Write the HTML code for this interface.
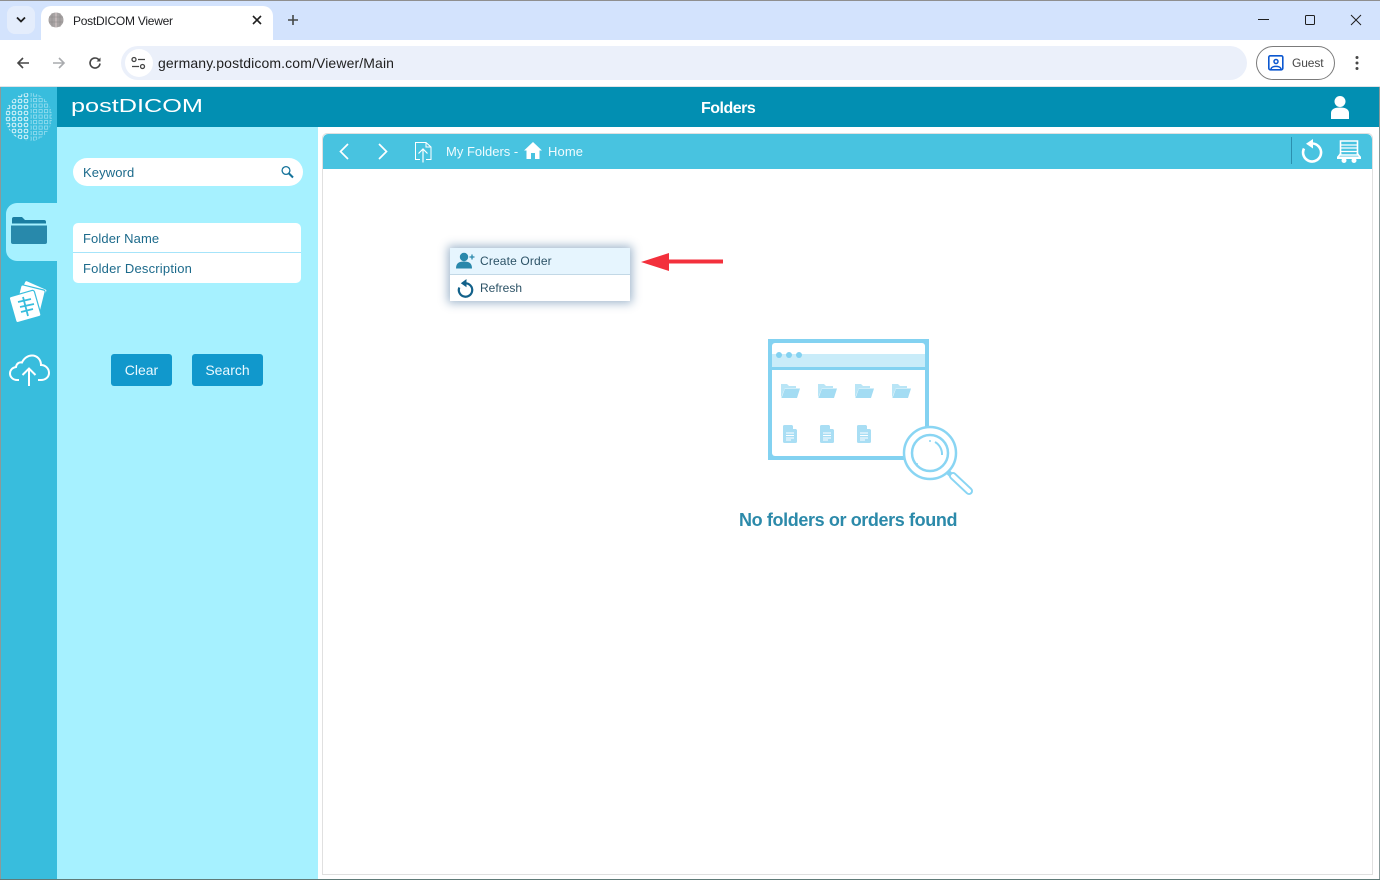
<!DOCTYPE html>
<html lang="en">
<head>
<meta charset="utf-8">
<title>PostDICOM Viewer</title>
<style>
html,body{margin:0;padding:0;width:1380px;height:880px;overflow:hidden;background:#fff;font-family:"Liberation Sans",sans-serif;}
.a{position:absolute;white-space:nowrap;}
svg{position:absolute;overflow:visible;}
</style>
</head>
<body>
<!-- Chrome frame -->
<div class="a" style="left:0;top:0;width:1380px;height:40px;background:#d3e3fd;"></div>
<div class="a" style="left:0;top:0;width:1380px;height:1px;background:#8f8f8f;"></div>
<div class="a" style="left:7px;top:6px;width:28px;height:28px;border-radius:8px;background:#e4edfc;"></div>
<svg style="left:16px;top:16px" width="10" height="8"><path d="M1 1.500L5 5.500L9 1.500" fill="none" stroke="#1f1f1f" stroke-width="1.800"/></svg>
<div class="a" style="left:41px;top:6px;width:232px;height:34px;background:#fff;border-radius:10px 10px 0 0;"></div>
<svg style="left:48px;top:12px" width="16" height="16"><circle cx="8" cy="8" r="7.500" fill="#a7a3a3"/><path d="M8 .5V15.500" stroke="#d9c8c8" stroke-width="1"/><path d="M1 5H15M1 10H15M4 1V15M12 1V15" stroke="#8b8686" stroke-width=".5"/></svg>
<div class="a" style="left:73px;top:14px;font-size:12px;line-height:15px;color:#202124;letter-spacing:-.25px;">PostDICOM Viewer</div>
<svg style="left:252px;top:15px" width="10" height="10"><path d="M1 1L9 9M9 1L1 9" stroke="#1f1f1f" stroke-width="1.600"/></svg>
<svg style="left:287px;top:14px" width="12" height="12"><path d="M6 1V11M1 6H11" stroke="#444746" stroke-width="1.600"/></svg>
<svg style="left:1258px;top:19px" width="11" height="2"><path d="M0 .5H11" stroke="#1f1f1f" stroke-width="1"/></svg>
<svg style="left:1305px;top:15px" width="10" height="10"><rect x=".5" y=".5" width="9" height="9" rx="1" fill="none" stroke="#1f1f1f" stroke-width="1"/></svg>
<svg style="left:1351px;top:15px" width="10" height="10"><path d="M0 0L10 10M10 0L0 10" stroke="#1f1f1f" stroke-width="1"/></svg>
<!-- Toolbar -->
<div class="a" style="left:1px;top:40px;width:1378px;height:46px;background:#fff;"></div>
<div class="a" style="left:0;top:86px;width:1380px;height:1px;background:#dfe3e8;"></div>
<svg style="left:16px;top:56px" width="14" height="14"><path d="M13 7H2M7 2L2 7L7 12" fill="none" stroke="#474747" stroke-width="1.600"/></svg>
<svg style="left:52px;top:56px" width="14" height="14"><path d="M1 7H12M7 2L12 7L7 12" fill="none" stroke="#a9abae" stroke-width="1.600"/></svg>
<svg style="left:88px;top:56px" width="14" height="14"><path d="M12 7.500A5 5 0 1 1 10.500 3.400L12 5" fill="none" stroke="#474747" stroke-width="1.600"/><path d="M12.500 1.500V5.500H8.500" fill="#474747"/></svg>
<div class="a" style="left:121px;top:46px;width:1126px;height:34px;border-radius:17px;background:#ebf0fa;"></div>
<div class="a" style="left:125px;top:49px;width:28px;height:28px;border-radius:14px;background:#fff;"></div>
<svg style="left:131px;top:56px" width="15" height="14"><circle cx="3" cy="3.500" r="2" fill="none" stroke="#444" stroke-width="1.300"/><path d="M7 3.500H14M1 10.500H8" stroke="#444" stroke-width="1.300"/><circle cx="11.500" cy="10.500" r="2" fill="none" stroke="#444" stroke-width="1.300"/></svg>
<div class="a" style="left:158px;top:55px;font-size:14px;line-height:16px;color:#1f1f1f;letter-spacing:.12px;">germany.postdicom.com/Viewer/Main</div>
<div class="a" style="left:1256px;top:46px;width:77px;height:32px;border:1px solid #7b7b7b;border-radius:17px;background:#fff;"></div>
<svg style="left:1268px;top:55px" width="16" height="16"><rect x=".8" y=".8" width="14" height="14" rx="1.500" fill="none" stroke="#0b57d0" stroke-width="1.600"/><circle cx="8" cy="6.500" r="2" fill="none" stroke="#0b57d0" stroke-width="1.500"/><path d="M3 14C3.500 10.500 12.500 10.500 13 14" fill="none" stroke="#0b57d0" stroke-width="1.500"/></svg>
<div class="a" style="left:1292px;top:56px;font-size:12px;line-height:15px;color:#474747;letter-spacing:-.1px;">Guest</div>
<svg style="left:1355px;top:55px" width="4" height="16"><circle cx="2" cy="2.500" r="1.500" fill="#474747"/><circle cx="2" cy="8" r="1.500" fill="#474747"/><circle cx="2" cy="13.500" r="1.500" fill="#474747"/></svg>

<!-- App header -->
<div class="a" style="left:1px;top:87px;width:1378px;height:40px;background:#028fb2;"></div>
<div class="a" style="left:1px;top:87px;width:56px;height:793px;background:#38bddd;"></div>
<div class="a" style="left:57px;top:127px;width:261px;height:753px;background:#a6f1ff;"></div>
<svg style="left:5px;top:92px" width="48" height="50" viewBox="0 0 48 50">
<defs>
<pattern id="l" width="6" height="6" patternUnits="userSpaceOnUse"><rect x="1.200" y="1.200" width="3.600" height="3.600" rx="1.500" fill="none" stroke="#fff" stroke-width="1"/></pattern>
<pattern id="r" width="5.500" height="5.500" patternUnits="userSpaceOnUse"><rect x="1" y="1" width="3.200" height="3.200" fill="none" stroke="#d9f4fb" stroke-width=".8"/></pattern>
<clipPath id="cl"><path d="M24.500 1A24 24 0 0 0 24.500 49Z"/></clipPath>
<clipPath id="cr"><path d="M25.500 1C37 1 47 12 47 25C47 38 37 49 25.500 49Z"/></clipPath>
</defs>
<rect x="0" y="0" width="25" height="50" fill="url(#l)" clip-path="url(#cl)" opacity=".8"/>
<rect x="25" y="0" width="24" height="50" fill="url(#r)" clip-path="url(#cr)" opacity=".6"/>
</svg>
<svg style="left:71px;top:97px" width="134" height="20"><text x="0" y="15" font-family="Liberation Sans" font-size="18.500" fill="#fff" textLength="132" lengthAdjust="spacingAndGlyphs">postDICOM</text></svg>
<div class="a" style="left:701px;top:99px;font-size:16px;line-height:19px;font-weight:bold;color:#fff;letter-spacing:-.5px;">Folders</div>
<svg style="left:1330px;top:95px" width="20" height="25"><circle cx="10" cy="6.500" r="5.500" fill="#fff"/><path d="M1 24V18C1 14 5 12.500 10 12.500C15 12.500 19 14 19 18V24Z" fill="#fff"/></svg>

<!-- Sidebar tabs -->
<div class="a" style="left:6px;top:203px;width:51px;height:58px;background:#a6f1ff;border-radius:11px 0 0 11px;"></div>
<svg style="left:11px;top:216px" width="37" height="29"><path d="M1 12V3Q1 1 3 1H11L14 4H33Q35 4 35 6V12Z" fill="#1a7ea2"/><path d="M1 7.500H35V10H1Z" fill="#a6f1ff"/><path d="M0 9.500H36V26Q36 28 34 28H2Q0 28 0 26Z" fill="#2889ab"/></svg>
<svg style="left:9px;top:281px" width="40" height="43" viewBox="0 0 40 43">
<rect x="11" y="3" width="24" height="22" rx="2" fill="#fff" stroke="#38bddd" stroke-width="1" transform="rotate(24 23 14)"/>
<rect x="9" y="6" width="25" height="24" rx="2" fill="#fff" stroke="#38bddd" stroke-width="1.200" transform="rotate(14 21 18)"/>
<rect x="3" y="12" width="26" height="27" rx="2" fill="#fff" stroke="#38bddd" stroke-width="1.200" transform="rotate(-16 16 25)"/>
<path d="M14 16L19 35M9 21L22 18M11 26L25 23M12 31L24 28" stroke="#38bddd" stroke-width="1.800" fill="none"/>
</svg>
<svg style="left:9px;top:354px" width="41" height="33" viewBox="0 0 41 33"><path d="M10 26H8C4 26 1 23 1 19.500C1 16 3.500 13.500 7 13C7.500 9.500 10 8 13 8.500C15 4 19 1.500 23 1.500C28 1.500 32 5.500 32 11C36.500 11 40 14.500 40 19C40 23 36.500 26 32 26H29" fill="none" stroke="#fff" stroke-width="2"/><path d="M20 32V15M13.500 21L20 14.500L26.500 21" fill="none" stroke="#fff" stroke-width="2"/></svg>

<!-- Left panel -->
<div class="a" style="left:73px;top:158px;width:230px;height:28px;border-radius:14px;background:#fff;"></div>
<div class="a" style="left:83px;top:165px;font-size:13px;line-height:16px;color:#1c6a8b;letter-spacing:.1px;">Keyword</div>
<svg style="left:281px;top:165px" width="13" height="14"><circle cx="5" cy="5.500" r="3.900" fill="none" stroke="#14729a" stroke-width="1.300"/><path d="M8 8.500L12 12.500" stroke="#14729a" stroke-width="2"/></svg>
<div class="a" style="left:73px;top:223px;width:228px;height:60px;border-radius:5px;background:#fff;"></div>
<div class="a" style="left:73px;top:252px;width:228px;height:1px;background:#a6e4fa;"></div>
<div class="a" style="left:83px;top:231px;font-size:13px;line-height:16px;color:#1c6a8b;letter-spacing:.1px;">Folder Name</div>
<div class="a" style="left:83px;top:261px;font-size:13px;line-height:16px;color:#1c6a8b;letter-spacing:.2px;">Folder Description</div>
<div class="a" style="left:111px;top:354px;width:61px;height:32px;border-radius:3px;background:#1198cc;color:#e9f9ff;font-size:14px;line-height:32px;text-align:center;">Clear</div>
<div class="a" style="left:192px;top:354px;width:71px;height:32px;border-radius:3px;background:#1198cc;color:#e9f9ff;font-size:14px;line-height:32px;text-align:center;">Search</div>

<!-- Main panel -->
<div class="a" style="left:322px;top:133px;width:1049px;height:740px;border:1px solid #e0e0e0;border-radius:5px 5px 0 0;background:#fff;"></div>
<div class="a" style="left:323px;top:134px;width:1049px;height:35px;background:#48c3e0;border-radius:5px 5px 0 0;"></div>
<svg style="left:339px;top:143px" width="10" height="17"><path d="M9 1L1.500 8.500L9 16" fill="none" stroke="#fff" stroke-width="1.700"/></svg>
<svg style="left:378px;top:143px" width="10" height="17"><path d="M1 1L8.500 8.500L1 16" fill="none" stroke="#fff" stroke-width="1.700"/></svg>
<svg style="left:415px;top:142px" width="17" height="21"><path d="M5 17.500H.5V.5H11L16 5V17.500H11" fill="none" stroke="#fff" stroke-width="1"/><path d="M11 .5V5H16" fill="none" stroke="#fff" stroke-width="1"/><path d="M8 20.500V7M3.500 11.500L8 7L12.500 11.500" fill="none" stroke="#fff" stroke-width="1.200"/></svg>
<div class="a" style="left:446px;top:144px;font-size:13px;line-height:16px;color:#f0fbfe;">My Folders -</div>
<svg style="left:524px;top:142px" width="18" height="17"><path d="M9 0L18 8.500H15.500V17H11V11H7V17H2.500V8.500H0Z" fill="#fff"/></svg>
<div class="a" style="left:548px;top:144px;font-size:13px;line-height:16px;color:#f0fbfe;letter-spacing:.1px;">Home</div>
<div class="a" style="left:1291px;top:137px;width:1px;height:27px;background:#2b8fae;"></div>
<svg style="left:1301px;top:139px" width="22" height="24"><path d="M11 4.500A9 9 0 1 1 3 9.500" fill="none" stroke="#fff" stroke-width="2.600"/><path d="M12 0V9.500L5 4.700Z" fill="#fff"/></svg>
<svg style="left:1337px;top:140px" width="24" height="24"><path d="M3.500 1H20.500V15H3.500Z" fill="none" stroke="#fff" stroke-width="1.600"/><path d="M3.500 5H20.500M3.500 8H20.500M3.500 11.500H20.500" stroke="#fff" stroke-width="1.300"/><path d="M0 16.500H24V19H0Z" fill="#fff"/><circle cx="7" cy="20.500" r="2.500" fill="#fff"/><circle cx="17" cy="20.500" r="2.500" fill="#fff"/><path d="M1 17L4 13M23 17L20 13" stroke="#fff" stroke-width="1.500"/></svg>

<!-- Context menu -->
<div class="a" style="left:450px;top:248px;width:180px;height:53px;background:#fff;box-shadow:0 0 9px 2px rgba(40,90,140,.45);"></div>
<div class="a" style="left:450px;top:248px;width:180px;height:26px;background:#e6f5fe;"></div>
<div class="a" style="left:450px;top:274px;width:180px;height:1px;background:#c2d8e6;"></div>
<svg style="left:456px;top:252px" width="19" height="17"><circle cx="8" cy="5" r="4.200" fill="#2a88ab"/><path d="M0 16.500C0 11 3 9.500 8 9.500C13 9.500 16 11 16 16.500Z" fill="#2a88ab"/><path d="M13.500 5H18.500M16 2.500V7.500" stroke="#2a88ab" stroke-width="1.300"/></svg>
<div class="a" style="left:480px;top:254px;font-size:12px;line-height:15px;color:#2c5266;letter-spacing:.15px;">Create Order</div>
<svg style="left:457px;top:279px" width="17" height="19"><path d="M8.500 4.300A6.700 6.700 0 1 1 2.300 8.500" fill="none" stroke="#12618a" stroke-width="2.200"/><path d="M9.500 0V8.300L3.800 4.300Z" fill="#12618a"/></svg>
<div class="a" style="left:480px;top:281px;font-size:12px;line-height:15px;color:#2c5266;">Refresh</div>
<svg style="left:640px;top:251px" width="84" height="22"><path d="M1 11L29 2V8.500H83V12.500H29V20Z" fill="#f3303c"/></svg>

<!-- Empty illustration -->
<svg style="left:768px;top:339px" width="206" height="158" viewBox="0 0 206 158">
<rect x="0" y="0" width="161" height="121" fill="#83d2f1"/>
<rect x="4" y="4" width="153" height="113" rx="3" fill="#fff"/>
<rect x="4" y="15" width="153" height="13" fill="#c9ecf9"/>
<rect x="4" y="28" width="153" height="3" fill="#83d2f1"/>
<circle cx="11" cy="16" r="3" fill="#83d2f1"/><circle cx="21" cy="16" r="3" fill="#83d2f1"/><circle cx="31" cy="16" r="3" fill="#83d2f1"/>
<defs>
<g id="f"><path d="M0 15V1H6L8 3H15V5H4Z" fill="#b9e5f6"/><path d="M4 5.500H19L16 15H0.500Z" fill="#a3dcf3"/></g>
<g id="d"><path d="M1.500 0H9L14 5V16.500Q14 18 12.500 18H1.500Q0 18 0 16.500V1.500Q0 0 1.500 0Z" fill="#a9def4"/><path d="M3 8H11M3 10.500H11M3 13H11M3 15H8" stroke="#fff" stroke-width="1"/><path d="M10 0V4H14" fill="#fff"/></g>
</defs>
<use href="#f" x="13" y="44"/><use href="#f" x="50" y="44"/><use href="#f" x="87" y="44"/><use href="#f" x="124" y="44"/>
<use href="#d" x="15" y="86"/><use href="#d" x="52" y="86"/><use href="#d" x="89" y="86"/>
<path d="M176 129L184 137" stroke="#89d5f3" stroke-width="5"/>
<path d="M185 137L201 152" stroke="#89d5f3" stroke-width="8" stroke-linecap="round"/>
<path d="M185 137L201 152" stroke="#fff" stroke-width="4" stroke-linecap="round"/>
<circle cx="162" cy="114" r="26" fill="#fff" stroke="#89d5f3" stroke-width="2.500"/>
<circle cx="162" cy="114" r="18" fill="#fff" stroke="#89d5f3" stroke-width="2.500"/>
<path d="M167 103A14 14 0 0 1 174 116" fill="none" stroke="#89d5f3" stroke-width="2"/>
<circle cx="162" cy="102" r="1" fill="#89d5f3"/><circle cx="149" cy="125" r="1" fill="#89d5f3"/>
</svg>
<div class="a" style="left:739px;top:509px;font-size:18px;line-height:22px;font-weight:bold;color:#2c8aaa;letter-spacing:-.38px;">No folders or orders found</div>

<div class="a" style="left:0;top:87px;width:1px;height:793px;background:#8a9a9a;"></div>
<div class="a" style="left:1379px;top:87px;width:1px;height:793px;background:#8a9a9a;"></div>
<div class="a" style="left:0;top:879px;width:1380px;height:1px;background:#5f7a78;"></div>
</body>
</html>
